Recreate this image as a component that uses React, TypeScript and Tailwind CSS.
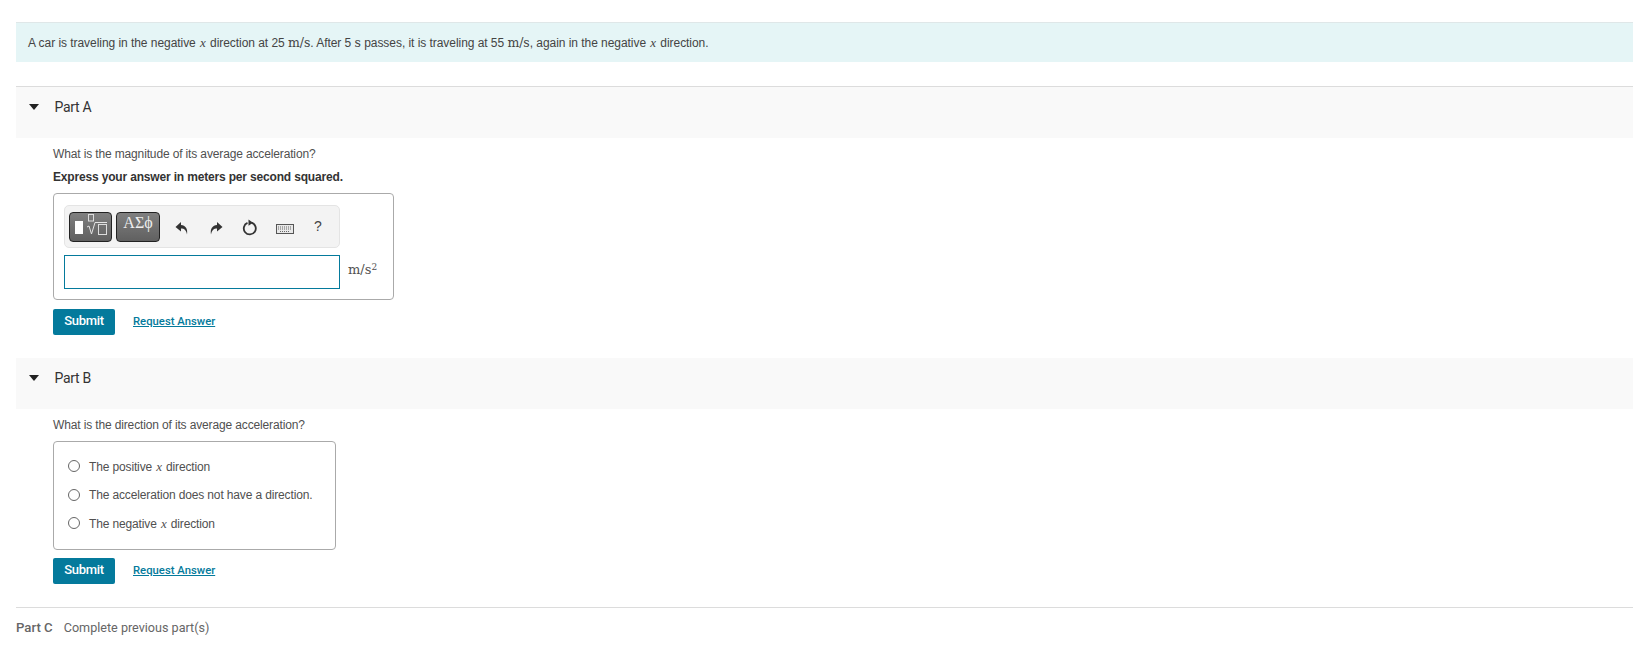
function X() {
  return <span className="font-['Liberation_Serif',serif] italic text-[13px] mx-[1px]">x</span>;
}

function Unit({ children }: { children: React.ReactNode }) {
  return <span className="font-['DejaVu_Serif',serif] text-[12.500px]">{children}</span>;
}

function PartHeader({ label }: { label: string }) {
  return (
    <div className="h-[51px] bg-[#f9f9f9] flex items-start pt-[10px] pl-[12.500px]">
      <svg width="10" height="6" viewBox="0 0 10 6" className="mt-[7px] mr-[16px]">
        <path d="M0 0h10L5 6z" fill="#222" />
      </svg>
      <span className="text-[14px] leading-[20px] text-[#333] tracking-[-0.3px]">{label}</span>
    </div>
  );
}

function Actions() {
  return (
    <div className="flex items-center">
      <button className="w-[62px] h-[26px] rounded-[2px] bg-[#047a9c] text-white text-[13px] font-medium tracking-[-0.3px] pb-[2px] font-['Roboto',sans-serif]">
        Submit
      </button>
      <a className="ml-[18px] text-[11.300px] font-medium text-[#047a9c] underline font-['Roboto',sans-serif]">Request Answer</a>
    </div>
  );
}

function Radio({ children }: { children: React.ReactNode }) {
  return (
    <div className="h-[28.500px] flex items-center text-[12px] tracking-[-0.14px] text-[#505050]">
      <span className="w-[12px] h-[12px] rounded-full border border-[#666] bg-white mr-[9px]" />
      <span>{children}</span>
    </div>
  );
}

function Toolbar() {
  return (
    <div className="w-[276px] h-[43px] rounded-[5px] border border-[#e4e4e4] bg-[#f3f3f3] flex items-center pl-[4px]">
      <div className="w-[43px] h-[30px] rounded-[4px] border border-[#222] bg-gradient-to-b from-[#808080] to-[#606060]">
        <svg width="41" height="28" viewBox="0 0 41 28">
          <rect x="5" y="8" width="8" height="13" fill="#fff" />
          <rect x="18.500" y="1.500" width="5" height="6.500" fill="none" stroke="#ddd" />
          <path d="M17 14l2-1 2.500 8L25 9.500h12" fill="none" stroke="#e4e4e4" />
          <rect x="28.500" y="11.500" width="8" height="10" fill="none" stroke="#ddd" />
        </svg>
      </div>
      <div className="ml-[4px] w-[44px] h-[30px] rounded-[4px] border border-[#222] bg-gradient-to-b from-[#808080] to-[#606060] text-[#eee] text-[16px] leading-[20px] text-center font-['Liberation_Serif',serif]">
        ΑΣϕ
      </div>
      <svg width="14" height="14" viewBox="0 0 14 14" className="ml-[15px] mt-[3px]">
        <path d="M6 1 0.500 6 6 10.500V7.500c3 0 5 1 6 6 1-6-1.500-9-6-9.500z" fill="#333" />
      </svg>
      <svg width="14" height="14" viewBox="0 0 14 14" className="ml-[20px] mt-[3px]">
        <path d="M8 1l5.500 5L8 10.500V7.500c-3 0-5 1-6 6-1-6 1.500-9 6-9.500z" fill="#333" />
      </svg>
      <svg width="16" height="17" viewBox="0 0 16 17" className="ml-[19px] mt-[1px]">
        <path d="M9.500 3.700a6 6 0 1 1-4 .2" fill="none" stroke="#333" strokeWidth="1.800" />
        <path d="M6.500 0.500l4.500 3.200-4.500 3z" fill="#333" />
      </svg>
      <svg width="18" height="10" viewBox="0 0 18 10" className="ml-[18px] mt-[5px]">
        <rect x="0.500" y="0.500" width="17" height="9" fill="#e8e8e8" stroke="#555" />
        <path d="M2 3h14M2 5h14M4 7.500h10" stroke="#666" strokeDasharray="1 1" />
      </svg>
      <span className="ml-[20px] text-[14px] text-[#444] font-['Liberation_Sans',sans-serif]">?</span>
    </div>
  );
}

export default function App() {
  return (
    <div className="min-h-[656px] bg-white pl-[16px] pt-[22px] font-['Liberation_Sans',sans-serif] text-[#505050] overflow-hidden">
      <div className="h-[40px] bg-[#e5f5f6] border-t border-[#dfe7e8] flex items-center pl-[12px] text-[12px] tracking-[-0.05px] text-[#444]">
        <span>
          A car is traveling in the negative <X /> direction at 25 <Unit>m/s</Unit>. After 5 <Unit>s</Unit> passes, it is traveling at 55 <Unit>m/s</Unit>, again in the negative <X /> direction.
        </span>
      </div>

      <div className="mt-[24px] border-t border-[#dcdcdc] font-['Roboto',sans-serif]">
        <PartHeader label="Part A" />
      </div>
      <div className="pl-[37px]">
        <p className="mt-[8px] text-[12px] leading-[16px] tracking-[-0.14px]">What is the magnitude of its average acceleration?</p>
        <p className="mt-[7px] text-[12px] leading-[16px] tracking-[-0.17px] font-bold text-[#333]">Express your answer in meters per second squared.</p>
        <div className="mt-[8px] w-[341px] h-[107px] rounded-[4px] border border-[#aaa] pl-[10px] pt-[11px]">
          <Toolbar />
          <div className="mt-[7px] flex items-center">
            <div className="w-[276px] h-[34px] border border-[#047a9c] bg-white" />
            <span className="ml-[8px] mb-[4px] font-['DejaVu_Serif',serif] text-[13px]">
              m/s<sup className="text-[9px]">2</sup>
            </span>
          </div>
        </div>
        <div className="mt-[9px]">
          <Actions />
        </div>
      </div>

      <div className="mt-[23px] font-['Roboto',sans-serif]">
        <PartHeader label="Part B" />
      </div>
      <div className="pl-[37px]">
        <p className="mt-[8px] text-[12px] leading-[16px] tracking-[-0.14px]">What is the direction of its average acceleration?</p>
        <div className="mt-[8px] w-[283px] h-[109px] rounded-[4px] border border-[#aaa] pl-[14px] pt-[10px]">
          <Radio>The positive <X /> direction</Radio>
          <Radio>The acceleration does not have a direction.</Radio>
          <Radio>The negative <X /> direction</Radio>
        </div>
        <div className="mt-[8px]">
          <Actions />
        </div>
      </div>

      <div className="mt-[23px] border-t border-[#dcdcdc] pt-[10px] text-[13.200px] leading-[20px] text-[#666] font-['Roboto',sans-serif]">
        <span className="font-medium">Part C</span>
        <span className="ml-[11px] text-[12.600px]">Complete previous part(s)</span>
      </div>
    </div>
  );
}
